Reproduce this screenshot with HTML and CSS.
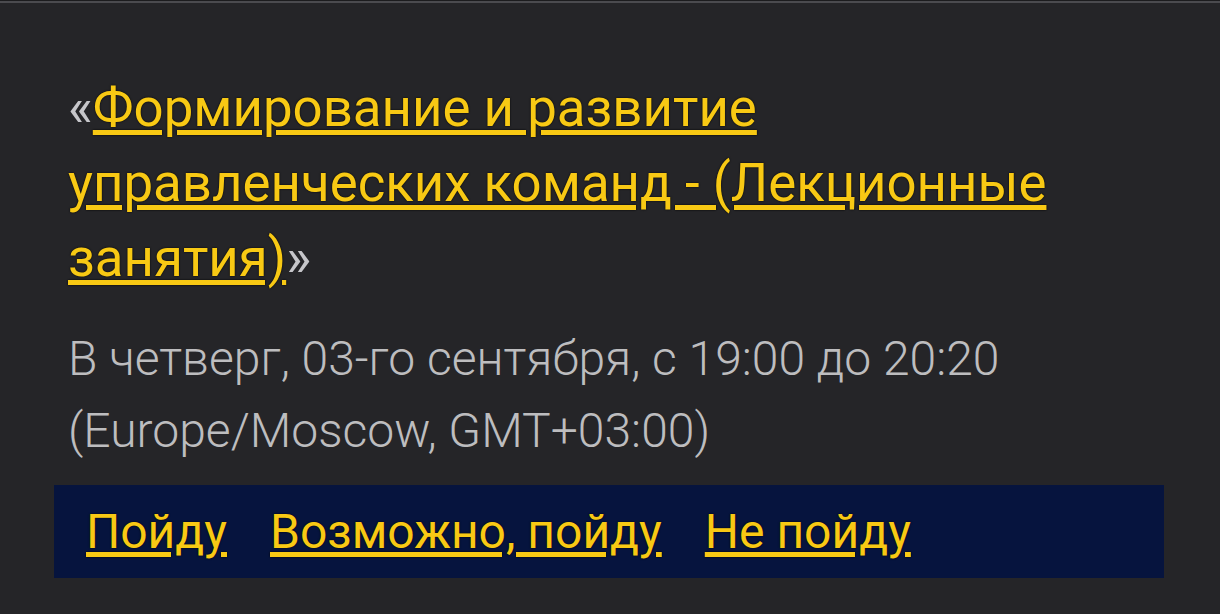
FILE: index.html
```html
<!DOCTYPE html>
<html lang="ru">
<head>
<meta charset="utf-8">
<link rel="stylesheet" href="styles.css">
</head>
<body>
<div class="topbar"></div>
<main class="card">
  <h1 class="title"><span class="quote">«</span><a class="link" href="#">Формирование и развитие управленческих команд - (Лекционные занятия)</a><span class="quote">»</span></h1>
  <p class="when">В четверг, 03-го сентября, с 19:00 до 20:20 (Europe/Moscow, GMT+03:00)</p>
  <nav class="actions">
    <a class="btn" href="#">Пойду</a>
    <a class="btn" href="#">Возможно, пойду</a>
    <a class="btn" href="#">Не пойду</a>
  </nav>
</main>
</body>
</html>
```
FILE: styles.css
```css
html, body {
  margin: 0;
  padding: 0;
  background: #252528;
  height: 100%;
  overflow: hidden;
}
body {
  font-family: Roboto, "Noto Sans", sans-serif;
}
.topbar {
  height: 2px;
  border-top: 1px solid #1c1c1e;
  background: #4b4b4f;
}
.card {
  padding: 68px 56px 0 54px;
}
.title {
  margin: 0 0 0 14px;
  font-size: 52.8px;
  font-weight: 400;
  line-height: 75px;
  color: #b5b5b8;
  width: 1010px;
}
.quote {
  color: #c6c6ca;
}
.link {
  color: #f8c914;
  text-decoration: underline;
  text-decoration-thickness: 5px;
  text-underline-offset: 4px;
  text-shadow: 0 0 2px #000;
}
.when {
  margin: 27px 0 0 14px;
  font-size: 48px;
  font-weight: 300;
  line-height: 72px;
  color: #bdbdbf;
  width: 1010px;
}
.actions {
  margin-top: 18px;
  background: #06143e;
  height: 93px;
  display: flex;
  align-items: center;
  gap: 43px;
  padding-left: 32px;
}
.btn {
  font-size: 48px;
  color: #f8c914;
  text-decoration: underline;
  text-decoration-thickness: 5px;
  text-underline-offset: 4px;
  text-shadow: 0 0 2px #000;
}
```
